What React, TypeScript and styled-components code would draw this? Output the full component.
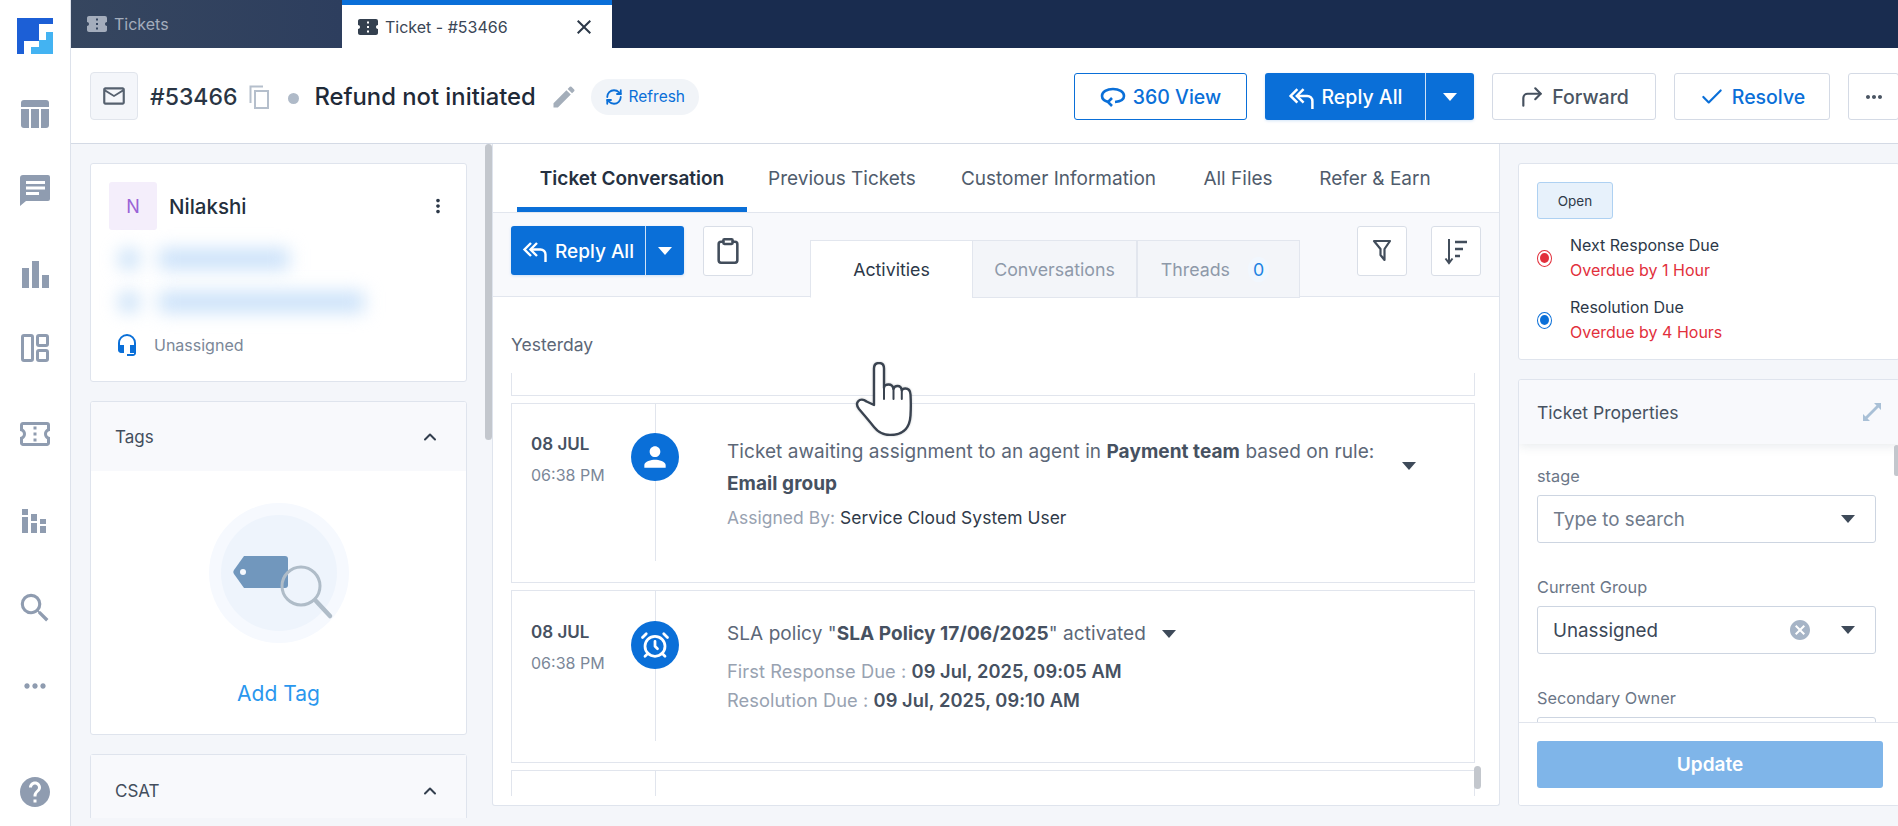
import React from 'react';
import styled, { createGlobalStyle } from 'styled-components';
import { MdConfirmationNumber, MdOutlineConfirmationNumber, MdSearch, MdMoreHoriz, MdHelp, MdMailOutline, MdEdit, MdPerson, MdHeadsetMic, MdCancel, MdClose, MdMoreVert } from 'react-icons/md';
import { CornerUpRight, Check, Clipboard, ChevronUp, AlarmClock, RefreshCw } from 'lucide-react';

const FONT = `"Inter", "Noto Sans", "Liberation Sans", sans-serif`;

const Global = createGlobalStyle`
  html, body { margin: 0; padding: 0; height: 826px; overflow: hidden; background: #f4f6fa; }
  * { box-sizing: border-box; }
  body { font-family: ${FONT}; color: #2c3848; }
`;

const Page = styled.div`
  position: relative;
  display: flex;
  width: 1898px;
  height: 826px;
  overflow: hidden;
`;

const Sidebar = styled.nav`
  width: 71px;
  flex: none;
  background: #fff;
  border-right: 1px solid #dde2eb;
  display: flex;
  flex-direction: column;
  align-items: center;
  padding-top: 18px;
`;

const NavSlot = styled.div<{ $mt?: number }>`
  height: 40px;
  width: 100%;
  margin-top: ${p => p.$mt ?? 0}px;
  display: flex;
  align-items: center;
  justify-content: center;
  color: #8f9cb0;
  flex: none;
`;

const LogoSlot = styled.div`
  height: 36px;
  flex: none;
  display: flex;
`;

const Main = styled.div`
  flex: 1;
  min-width: 0;
  display: flex;
  flex-direction: column;
`;

const TopBar = styled.div`
  height: 48px;
  flex: none;
  background: #192c4f;
  display: flex;
`;

const TabChip = styled.div<{ $active?: boolean }>`
  width: ${p => (p.$active ? 270 : 271)}px;
  display: flex;
  align-items: center;
  gap: 5px;
  padding: ${p => (p.$active ? '0 16px 0 14px' : '0 0 0 14px')};
  font-size: 16px;
  color: ${p => (p.$active ? '#3a4656' : '#a4adbc')};
  background: ${p => (p.$active ? '#fff' : 'linear-gradient(90deg,#36465f,#2d3e5e)')};
  border-top: ${p => (p.$active ? '5px solid #0a6fd8' : '0')};
`;

const TabIcon = styled.span<{ $active?: boolean }>`
  display: flex;
  color: ${p => (p.$active ? '#34404f' : '#a4adbc')};
`;

const TabClose = styled.span`
  margin-left: auto;
  display: flex;
  color: #2c3848;
`;

const Header = styled.header`
  height: 96px;
  flex: none;
  background: #fff;
  border-bottom: 1px solid #d4dae5;
  display: flex;
  align-items: center;
  padding: 2px 0 0 19px;
  overflow: hidden;
`;

const MailBox = styled.div`
  width: 48px;
  height: 48px;
  border: 1px solid #e1e5ec;
  border-radius: 4px;
  background: #f4f6fa;
  display: flex;
  align-items: center;
  justify-content: center;
  color: #56616f;
  margin: -2px 12px 0 0;
`;

const TicketNo = styled.div`
  font-size: 23px;
  color: #2a3544;
  font-weight: 500;
  margin-right: 12px;
`;

const Dot = styled.span`
  width: 11px;
  height: 11px;
  border-radius: 50%;
  background: #afbac8;
  margin: 3px 15px 0 19px;
`;

const TicketTitle = styled.div`
  font-size: 23.8px;
  font-weight: 500;
  color: #1f2a38;
  margin-right: 14px;
`;

const RefreshPill = styled.div`
  height: 36px;
  width: 108px;
  border-radius: 18px;
  margin-left: 13px;
  background: #f1f4f8;
  display: flex;
  align-items: center;
  justify-content: center;
  gap: 6px;
  color: #0a6fd8;
  font-size: 15.5px;
`;

const HeaderRight = styled.div`
  margin-left: auto;
  display: flex;
  align-items: center;
  gap: 18px;
  margin-right: -1px;
`;

const OutlineBtn = styled.div<{ $w: number; $tone?: 'blue' | 'plain' | 'resolve' }>`
  width: ${p => p.$w}px;
  height: 47px;
  flex: none;
  background: #fff;
  border-radius: 3px;
  border: 1px solid ${p => (p.$tone === 'blue' ? '#0a6fd8' : '#d4dae5')};
  color: ${p => (p.$tone === 'plain' ? '#4a5563' : '#0a6fd8')};
  display: flex;
  align-items: center;
  justify-content: center;
  gap: 7px;
  font-size: 19.5px;
  font-weight: 500;
`;

const ForwardIc = styled.span`
  display: flex;
  color: #46515f;
`;

const SplitBtn = styled.div<{ $w: number; $main: number; $h: number; $fs: number }>`
  width: ${p => p.$w}px;
  height: ${p => p.$h}px;
  flex: none;
  display: grid;
  grid-template-columns: ${p => p.$main}px 1fr;
  background: #0a6fd8;
  border-radius: 3px;
  color: #fff;
  font-size: ${p => p.$fs}px;
  font-weight: 500;
  box-shadow: 0 1px 3px rgba(10, 111, 216, 0.18);
`;

const SplitMain = styled.div`
  display: flex;
  align-items: center;
  justify-content: center;
  gap: 7px;
  padding-top: 1px;
  border-right: 1px solid #cfe2f7;
`;

const SplitCaret = styled.div`
  display: flex;
  align-items: center;
  justify-content: center;
`;

const Caret = styled.span<{ $color?: string; $w?: number }>`
  display: block;
  width: 0;
  height: 0;
  border-left: ${p => p.$w ?? 7}px solid transparent;
  border-right: ${p => p.$w ?? 7}px solid transparent;
  border-top: ${p => (p.$w ?? 7) + 1}px solid ${p => p.$color ?? '#3e4a59'};
`;

const Body = styled.div`
  flex: 1;
  min-height: 0;
  display: flex;
  background: #f4f6fa;
`;

const LeftCol = styled.aside`
  position: relative;
  width: 421px;
  flex: none;
  padding: 19px 0 0 19px;
`;

const LeftStack = styled.div`
  width: 377px;
  height: 655px;
  overflow: hidden;
  display: flex;
  flex-direction: column;
  gap: 19px;
`;

const ScrollThumb = styled.span<{ $x: number; $y: number; $w: number; $h: number }>`
  position: absolute;
  left: ${p => p.$x}px;
  top: ${p => p.$y}px;
  width: ${p => p.$w}px;
  height: ${p => p.$h}px;
  background: #c3c7cd;
  border-radius: 4px;
`;

const Card = styled.section`
  background: #fff;
  border: 1px solid #dfe4ed;
  border-radius: 3px;
  flex: none;
`;

const ContactCard = styled(Card)`
  height: 219px;
  padding: 18px 18px 0 18px;
`;

const ContactTop = styled.div`
  display: flex;
  align-items: center;
`;

const Avatar = styled.div`
  width: 48px;
  height: 48px;
  background: #f4eefb;
  color: #9a63d6;
  border-radius: 3px;
  display: flex;
  align-items: center;
  justify-content: center;
  font-size: 18px;
  margin-right: 12px;
`;

const Name = styled.div`
  font-size: 20.5px;
  font-weight: 500;
  color: #242f3d;
`;

const Kebab = styled.span`
  margin-left: auto;
  margin-right: -1px;
  display: flex;
  color: #2c3848;
`;

const BlurRow = styled.div<{ $top: number }>`
  display: flex;
  align-items: center;
  gap: 20px;
  margin: ${p => p.$top}px 0 0 10px;
  filter: blur(9px);
`;

const BlurDot = styled.span`
  width: 20px;
  height: 20px;
  border-radius: 50%;
  background: #bcd9f6;
`;

const BlurBar = styled.span<{ $w: number }>`
  width: ${p => p.$w}px;
  height: 20px;
  background: #c8e0f9;
`;

const AssignRow = styled.div`
  display: flex;
  align-items: center;
  gap: 15px;
  margin: 21px 0 0 6px;
  color: #7b8798;
  font-size: 16px;
`;

const HeadIc = styled.span`
  display: flex;
  color: #0a6fd8;
`;

const CollapseHead = styled.div<{ $h: number }>`
  height: ${p => p.$h}px;
  background: #f8f9fc;
  display: flex;
  align-items: center;
  justify-content: space-between;
  padding: 0 26px 0 24px;
  font-size: 17px;
  color: #434e5d;
`;

const TagsCard = styled(Card)`
  height: 334px;
  overflow: hidden;
`;

const CsatCard = styled(Card)`
  height: 80px;
  background: #f8f9fc;
`;

const TagsBody = styled.div`
  display: flex;
  flex-direction: column;
  align-items: center;
  padding-top: 32px;
`;

const AddTag = styled.div`
  margin-top: 38px;
  color: #2a97ee;
  font-size: 21px;
`;

const Center = styled.main`
  width: 1008px;
  height: 662px;
  flex: none;
  background: #fff;
  border: 1px solid #dfe4ed;
  border-top: 0;
  border-radius: 0 0 3px 3px;
  display: flex;
  flex-direction: column;
  overflow: hidden;
  position: relative;
`;

const MainTabs = styled.div`
  height: 69px;
  flex: none;
  display: flex;
  border-bottom: 1px solid #e2e6ee;
  padding-left: 24px;
`;

const MainTab = styled.div<{ $active?: boolean; $w: number }>`
  width: ${p => p.$w}px;
  display: flex;
  align-items: center;
  justify-content: center;
  font-size: 19px;
  white-space: nowrap;
  color: ${p => (p.$active ? '#253040' : '#505c6c')};
  font-weight: ${p => (p.$active ? 600 : 400)};
  border-bottom: ${p => (p.$active ? '5px solid #0a6fd8' : '0')};
  padding-top: ${p => (p.$active ? '6px' : '0')};
`;

const SubBar = styled.div`
  height: 84px;
  flex: none;
  display: flex;
  background: #f8f9fc;
  border-bottom: 1px solid #e2e6ee;
  padding: 13px 0 0 18px;
`;

const SquareBtn = styled.div`
  width: 50px;
  height: 50px;
  flex: none;
  background: #fff;
  border: 1px solid #d9dee7;
  border-radius: 3px;
  display: flex;
  align-items: center;
  justify-content: center;
  color: #424d5b;
`;

const ClipWrap = styled(SquareBtn)`
  margin-left: 19px;
`;

const SegTabs = styled.div`
  display: flex;
  margin: 14px 0 -1px 57px;
`;

const Seg = styled.div<{ $active?: boolean; $w: number; $pr?: number }>`
  width: ${p => p.$w}px;
  height: 58px;
  display: flex;
  align-items: center;
  justify-content: center;
  gap: 18px;
  padding: 1px ${p => p.$pr ?? 0}px 0 0;
  font-size: 17.8px;
  border: 1px solid #e2e6ee;
  border-right-width: ${p => (p.$active ? 0 : 1)}px;
  border-bottom: ${p => (p.$active ? '1px solid #fff' : '1px solid #e2e6ee')};
  background: ${p => (p.$active ? '#fff' : '#f3f5f9')};
  color: ${p => (p.$active ? '#2c3848' : '#8e99a9')};
`;

const Count = styled.span`
  color: #1d83e2;
  background: #f1f7fe;
  border-radius: 50%;
  padding: 2px 5px;
`;

const SubRight = styled.div`
  display: flex;
  gap: 24px;
  margin-left: 57px;
`;

const DayLabel = styled.div`
  height: 76px;
  flex: none;
  padding: 37px 0 0 18px;
  font-size: 17.5px;
  line-height: 22px;
  color: #5c6777;
`;

const Feed = styled.div`
  flex: 1;
  min-height: 0;
  margin-left: 18px;
  width: 964px;
  overflow: hidden;
  display: flex;
  flex-direction: column;
  gap: 7px;
  margin-bottom: 9px;
`;

const EventCard = styled.article<{ $h: number; $open?: boolean }>`
  height: ${p => p.$h}px;
  flex: none;
  display: grid;
  grid-template-columns: 215px 1fr;
  border: 1px solid #e1e5ed;
  border-top-width: ${p => (p.$open ? 0 : 1)}px;
  border-bottom-width: ${p => (p.$h < 30 && !p.$open ? 0 : 1)}px;
  overflow: hidden;
`;

const TimeCol = styled.div<{ $lineH: number; $top?: number }>`
  position: relative;
  height: ${p => p.$lineH}px;
  padding: ${p => p.$top ?? 27}px 0 0 19px;
  display: flex;
  flex-direction: column;
  background: linear-gradient(#e1e5ed, #e1e5ed) no-repeat 143px 0 / 1px 100%;
`;

const DateText = styled.div`
  font-size: 17px;
  font-weight: 600;
  line-height: 26px;
  color: #465161;
`;

const TimeText = styled.div`
  font-size: 16px;
  line-height: 22px;
  margin-top: 7px;
  color: #7b8798;
`;

const EventDisc = styled.span<{ $top: number }>`
  position: absolute;
  left: 119px;
  top: ${p => p.$top}px;
  width: 48px;
  height: 48px;
  border-radius: 50%;
  background: #0a6fd8;
  color: #fff;
  display: flex;
  align-items: center;
  justify-content: center;
`;

const EventBody = styled.div<{ $top: number }>`
  padding-top: ${p => p.$top}px;
  font-size: 19px;
  letter-spacing: 0.06px;
  color: #5c6777;
  white-space: nowrap;
`;

const EventLine = styled.div`
  line-height: 32px;
  display: flex;
  align-items: center;
`;

const Strong = styled.b`
  font-weight: 700;
  color: #465161;
  white-space: pre;
`;

const LineText = styled.span`
  white-space: pre;
`;

const Muted = styled.div<{ $top?: number; $fs?: number }>`
  font-size: ${p => p.$fs ?? 17.4}px;
  line-height: 29px;
  color: #98a2b1;
  margin-top: ${p => p.$top ?? 0}px;
`;

const MetaValue = styled.span`
  color: #2f3a49;
`;

const MetaStrong = styled.b`
  color: #465161;
  font-weight: 600;
`;

const CaretSlot = styled.span<{ $ml: number; $mt: number }>`
  display: flex;
  align-self: flex-start;
  height: 0;
  margin-left: ${p => p.$ml}px;
  margin-top: ${p => p.$mt}px;
`;

const RightCol = styled.aside`
  flex: 1;
  min-width: 0;
  padding: 19px 0 0 18px;
  display: flex;
  flex-direction: column;
  gap: 19px;
  margin-right: -2px;
`;

const StatusCard = styled(Card)`
  height: 197px;
  padding: 18px;
`;

const OpenBadge = styled.div`
  width: 76px;
  height: 37px;
  background: #e7f1fb;
  border: 1px solid #aed1f2;
  border-radius: 3px;
  display: flex;
  align-items: center;
  justify-content: center;
  font-size: 13.5px;
  color: #2f3a49;
`;

const Sla = styled.div`
  display: flex;
  align-items: center;
  gap: 18px;
  margin: 0 0 12px 0;
`;

const SlaList = styled.div`
  margin-top: 14px;
`;

const SlaDot = styled.span<{ $c: string }>`
  width: 15px;
  height: 17px;
  border-radius: 50%;
  border: 1px solid ${p => p.$c};
  flex: none;
  display: flex;
  align-items: center;
  justify-content: center;
  &::after {
    content: '';
    width: 9px;
    height: 10px;
    border-radius: 50%;
    background: ${p => p.$c};
  }
`;

const SlaTitle = styled.div`
  font-size: 16px;
  line-height: 25px;
  color: #2c3848;
`;

const SlaOver = styled(SlaTitle)`
  color: #e2303c;
`;

const PropsCard = styled(Card)`
  position: relative;
  height: 427px;
  overflow: hidden;
  display: flex;
  flex-direction: column;
`;

const PropsHead = styled.div`
  height: 64px;
  flex: none;
  background: #f8f9fc;
  box-shadow: 0 2px 10px rgba(60, 80, 110, 0.12);
  display: flex;
  align-items: center;
  justify-content: space-between;
  padding: 0 17px 0 18px;
  font-size: 17.6px;
  color: #465161;
  position: relative;
`;

const PropsBody = styled.div`
  flex: 1;
  min-height: 0;
  overflow: hidden;
  padding: 21px 23px 0 18px;
`;

const FieldLabel = styled.div`
  font-size: 16.3px;
  line-height: 22px;
  color: #6b7687;
  margin-bottom: 8px;
`;

const Field = styled.div`
  height: 48px;
  border: 1px solid #cdd5e1;
  border-radius: 3px;
  background: #fff;
  display: flex;
  align-items: center;
  padding: 0 20px 0 15px;
  font-size: 18.8px;
  margin-bottom: 33px;
`;

const FieldText = styled.span<{ $ph?: boolean }>`
  color: ${p => (p.$ph ? '#707b8b' : '#3b4757')};
`;

const ClearIc = styled.span`
  margin-left: auto;
  margin-right: 29px;
  display: flex;
  color: #a6b4c6;
`;

const FieldCaret = styled.span<{ $auto?: boolean }>`
  display: flex;
  margin-left: ${p => (p.$auto ? 'auto' : '0')};
`;

const PropsFoot = styled.div`
  height: 83px;
  flex: none;
  border-top: 1px solid #e1e5ed;
  background: #fff;
  padding: 18px 0 0 18px;
`;

const UpdateBtn = styled.div`
  width: 346px;
  height: 47px;
  background: #7fb5e9;
  border-radius: 3px;
  color: #fff;
  font-size: 19px;
  font-weight: 600;
  display: flex;
  align-items: center;
  justify-content: center;
`;

const HandCursor = styled.svg`
  position: absolute;
  left: 855px;
  top: 362px;
  pointer-events: none;
  filter: drop-shadow(0 0 1px rgba(40, 50, 60, 0.25));
`;

const Logo = () => (
  <svg width="36" height="36" viewBox="0 0 36 36" aria-hidden>
    <path d="M0 0H36V6H22V23H7V36H0Z" fill="#1c5fd6" />
    <path d="M29 14H36V36H14V29H22V22H29Z" fill="#43b3f2" />
  </svg>
);

const TableIcon = () => (
  <svg width="30" height="30" viewBox="0 0 30 30" fill="#8f9cb0" aria-hidden>
    <path d="M4 1h22a3 3 0 0 1 3 3v4H1V4a3 3 0 0 1 3-3z" />
    <path d="M1 10h8v19H4a3 3 0 0 1-3-3z" />
    <rect x="11" y="10" width="8" height="19" />
    <path d="M21 10h8v16a3 3 0 0 1-3 3h-5z" />
  </svg>
);

const ChatIcon = () => (
  <svg width="32" height="32" viewBox="0 0 32 32" fill="#8f9cb0" aria-hidden>
    <path d="M4 1h25a2 2 0 0 1 2 2v22a2 2 0 0 1-2 2H7l-6 5V4a3 3 0 0 1 3-3z" />
    <path d="M7 7h19v3H7zM7 12.500h19v3H7zM7 18h13v3H7z" fill="#fff" />
  </svg>
);

const ChartIcon = () => (
  <svg width="28" height="27" viewBox="0 0 28 27" fill="#8f9cb0" aria-hidden>
    <rect x="1" y="7" width="7" height="20" />
    <rect x="11" y="0" width="7" height="27" />
    <rect x="21" y="14" width="7" height="13" />
  </svg>
);

const PanelsIcon = () => (
  <svg width="30" height="30" viewBox="0 0 30 30" fill="none" stroke="#8f9cb0" strokeWidth="3" aria-hidden>
    <rect x="2.500" y="2.500" width="10" height="25" rx="1.500" />
    <rect x="17.500" y="2.500" width="10" height="10" rx="1.500" />
    <rect x="17.500" y="17.500" width="10" height="10" rx="1.500" />
  </svg>
);

const BarsIcon = () => (
  <svg width="28" height="26" viewBox="0 0 28 26" fill="#8f9cb0" aria-hidden>
    <rect x="1" y="1" width="6" height="6" />
    <rect x="1" y="9" width="6" height="16" />
    <rect x="10" y="6" width="6" height="7" />
    <rect x="10" y="15" width="6" height="10" />
    <rect x="19" y="11" width="6" height="5" />
    <rect x="19" y="18" width="6" height="7" />
  </svg>
);

const CopyIcon = () => (
  <svg width="20" height="24" viewBox="0 0 20 24" fill="none" stroke="#b5bfcc" strokeWidth="2" aria-hidden>
    <path d="M14 1.500H1.500V18" />
    <rect x="6" y="6" width="13" height="17" />
  </svg>
);

const View360 = () => (
  <svg width="26" height="22" viewBox="0 0 26 22" fill="none" stroke="#0a6fd8" strokeWidth="2.600" aria-hidden>
    <path d="M15 16c5-.500 9-2.500 9-6 0-4.200-5-7-11-7S2 5.800 2 10c0 3 3 5.200 7 6" />
    <path d="M12 12l-4 4 4 4" />
  </svg>
);

const ReplyAllGlyph = ({ size }: { size: number }) => (
  <svg width={size} height={size} viewBox="0 0 26 26" fill="none" stroke="#fff" strokeWidth="2.400" strokeLinejoin="miter" aria-hidden>
    <path d="M9 5 2.500 11.500 9 18" />
    <path d="M15 5 8.500 11.500 15 18" />
    <path d="M9 11.500h9.500a5 5 0 0 1 5 5V24" />
  </svg>
);

const SortIcon = () => (
  <svg width="24" height="30" viewBox="0 0 24 30" fill="none" stroke="#424d5b" strokeWidth="2" aria-hidden>
    <path d="M5 3v23M1.500 22.500 5 27l3.500-4.500" />
    <path d="M11 6h12M11 13h8M11 20h5" strokeWidth="2.400" />
  </svg>
);

const FunnelIcon = () => (
  <svg width="20" height="24" viewBox="0 0 20 24" fill="none" stroke="#424d5b" strokeWidth="2.200" aria-hidden>
    <path d="M2 2h16l-5.500 8v11l-4-5v-6z" strokeLinejoin="round" />
  </svg>
);

const TagArt = () => (
  <svg width="140" height="140" viewBox="0 0 140 140" aria-hidden>
    <circle cx="70" cy="70" r="70" fill="#f6f9fe" />
    <circle cx="70" cy="70" r="58" fill="#eef4fc" />
    <path d="M35 53H76a3 3 0 0 1 3 3V82a3 3 0 0 1-3 3H35L25 71a3.500 3.500 0 0 1 0-4z" fill="#7197bd" />
    <circle cx="34" cy="69" r="3" fill="#f6f9fe" />
    <circle cx="92" cy="83" r="19" fill="none" stroke="#afbcc8" strokeWidth="3" />
    <path d="M107 98l14 15" stroke="#afbcc8" strokeWidth="4.500" strokeLinecap="round" />
  </svg>
);

const ExpandIcon = () => (
  <svg width="20" height="20" viewBox="0 0 20 20" fill="#a9c0d6" aria-hidden>
    <path d="M12 1h7v7l-2.500-2.500L5.500 16.500 8 19H1v-7l2.500 2.500 11-11z" />
  </svg>
);

const Hand = () => (
  <HandCursor width="60" height="74" viewBox="0 0 60 74" aria-hidden>
    <path
      d="M19 43V6.500C19 3 21 1 24 1s5 2 5 5.500V26c0-2 2-3.500 4.500-3.500S38 24 38.500 27c.5-2 2-3 4-3s4 1.500 4.300 4.500c.5-1.500 2-2 3.500-2 3 0 5 2 5.200 6 .4 7 .4 14 0 21C54.800 65 49 73 35 73c-8 0-12-3-16-8-3.500-4.500-9-11-15-18-2-2.500-2.500-5.500-1-7.500 2-2.500 5.500-2.500 8.500 0z"
      fill="#fff"
      stroke="#3a4350"
      strokeWidth="2.400"
      strokeLinejoin="round"
    />
    <path d="M29 25v12M38.500 27v10M46.800 28v9" fill="none" stroke="#3a4350" strokeWidth="2" strokeLinecap="round" />
  </HandCursor>
);

export default function App() {
  return (
    <Page>
      <Global />
      <Sidebar>
        <LogoSlot><Logo /></LogoSlot>
        <NavSlot $mt={40}><TableIcon /></NavSlot>
        <NavSlot $mt={36}><ChatIcon /></NavSlot>
        <NavSlot $mt={44}><ChartIcon /></NavSlot>
        <NavSlot $mt={34}><PanelsIcon /></NavSlot>
        <NavSlot $mt={46}><MdOutlineConfirmationNumber size={36} /></NavSlot>
        <NavSlot $mt={47}><BarsIcon /></NavSlot>
        <NavSlot $mt={47}><MdSearch size={38} /></NavSlot>
        <NavSlot $mt={38}><MdMoreHoriz size={32} /></NavSlot>
        <NavSlot $mt={66}><MdHelp size={36} /></NavSlot>
      </Sidebar>
      <Main>
        <TopBar>
          <TabChip>
            <TabIcon><MdConfirmationNumber size={24} /></TabIcon>
            Tickets
          </TabChip>
          <TabChip $active>
            <TabIcon $active><MdConfirmationNumber size={24} /></TabIcon>
            Ticket - #53466
            <TabClose><MdClose size={24} /></TabClose>
          </TabChip>
        </TopBar>
        <Header>
          <MailBox><MdMailOutline size={26} /></MailBox>
          <TicketNo>#53466</TicketNo>
          <CopyIcon />
          <Dot />
          <TicketTitle>Refund not initiated</TicketTitle>
          <MdEdit size={28} color="#a4aeba" />
          <RefreshPill><RefreshCw size={18} strokeWidth={2.4} />Refresh</RefreshPill>
          <HeaderRight>
            <OutlineBtn $w={173} $tone="blue"><View360 />360 View</OutlineBtn>
            <SplitBtn $w={209} $main={161} $h={47} $fs={19.5}>
              <SplitMain><ReplyAllGlyph size={27} />Reply All</SplitMain>
              <SplitCaret><Caret $color="#fff" $w={7} /></SplitCaret>
            </SplitBtn>
            <OutlineBtn $w={164} $tone="plain"><ForwardIc><CornerUpRight size={26} strokeWidth={2} /></ForwardIc>Forward</OutlineBtn>
            <OutlineBtn $w={156} $tone="resolve"><Check size={26} strokeWidth={2} />Resolve</OutlineBtn>
            <OutlineBtn $w={51} $tone="plain"><MdMoreHoriz size={24} /></OutlineBtn>
          </HeaderRight>
        </Header>
        <Body>
          <LeftCol>
            <LeftStack>
              <ContactCard>
                <ContactTop>
                  <Avatar>N</Avatar>
                  <Name>Nilakshi</Name>
                  <Kebab><MdMoreVert size={22} /></Kebab>
                </ContactTop>
                <BlurRow $top={19}><BlurDot /><BlurBar $w={130} /></BlurRow>
                <BlurRow $top={23}><BlurDot /><BlurBar $w={205} /></BlurRow>
                <AssignRow><HeadIc><MdHeadsetMic size={24} /></HeadIc>Unassigned</AssignRow>
              </ContactCard>
              <TagsCard>
                <CollapseHead $h={69}>Tags<ChevronUp size={20} strokeWidth={2.4} color="#333f4e" /></CollapseHead>
                <TagsBody>
                  <TagArt />
                  <AddTag>Add Tag</AddTag>
                </TagsBody>
              </TagsCard>
              <CsatCard>
                <CollapseHead $h={72}>CSAT<ChevronUp size={20} strokeWidth={2.4} color="#333f4e" /></CollapseHead>
              </CsatCard>
            </LeftStack>
            <ScrollThumb $x={414} $y={0} $w={7} $h={296} />
          </LeftCol>
          <Center>
            <MainTabs>
              <MainTab $active $w={230}>Ticket Conversation</MainTab>
              <MainTab $w={190}>Previous Tickets</MainTab>
              <MainTab $w={243}>Customer Information</MainTab>
              <MainTab $w={116}>All Files</MainTab>
              <MainTab $w={158}>Refer &amp; Earn</MainTab>
            </MainTabs>
            <SubBar>
              <SplitBtn $w={173} $main={135} $h={49} $fs={19}>
                <SplitMain><ReplyAllGlyph size={26} />Reply All</SplitMain>
                <SplitCaret><Caret $color="#fff" $w={7} /></SplitCaret>
              </SplitBtn>
              <ClipWrap><Clipboard size={28} strokeWidth={2.2} /></ClipWrap>
              <SegTabs>
                <Seg $active $w={162}>Activities</Seg>
                <Seg $w={165}>Conversations</Seg>
                <Seg $w={163} $pr={7}>Threads<Count>0</Count></Seg>
              </SegTabs>
              <SubRight>
                <SquareBtn><FunnelIcon /></SquareBtn>
                <SquareBtn><SortIcon /></SquareBtn>
              </SubRight>
            </SubBar>
            <DayLabel>Yesterday</DayLabel>
            <Feed>
              <EventCard $h={23} $open />
              <EventCard $h={180}>
                <TimeCol $lineH={157}>
                  <DateText>08 JUL</DateText>
                  <TimeText>06:38 PM</TimeText>
                  <EventDisc $top={29}><MdPerson size={32} /></EventDisc>
                </TimeCol>
                <EventBody $top={32}>
                  <EventLine>
                    <LineText>Ticket awaiting assignment to an agent in </LineText>
                    <Strong>Payment team</Strong>
                    <LineText> based on rule:</LineText>
                    <CaretSlot $ml={28} $mt={26}><Caret $w={7} /></CaretSlot>
                  </EventLine>
                  <EventLine><Strong>Email group</Strong></EventLine>
                  <Muted $top={3}>Assigned By: <MetaValue>Service Cloud System User</MetaValue></Muted>
                </EventBody>
              </EventCard>
              <EventCard $h={173}>
                <TimeCol $lineH={150} $top={28}>
                  <DateText>08 JUL</DateText>
                  <TimeText>06:38 PM</TimeText>
                  <EventDisc $top={30}><AlarmClock size={30} strokeWidth={2.2} /></EventDisc>
                </TimeCol>
                <EventBody $top={27}>
                  <EventLine>
                    <LineText>SLA policy "</LineText>
                    <Strong>SLA Policy 17/06/2025</Strong>
                    <LineText>" activated</LineText>
                    <CaretSlot $ml={16} $mt={12}><Caret $w={7} /></CaretSlot>
                  </EventLine>
                  <Muted $top={7} $fs={18.3}>First Response Due : <MetaStrong>09 Jul, 2025, 09:05 AM</MetaStrong></Muted>
                  <Muted $fs={18.3}>Resolution Due : <MetaStrong>09 Jul, 2025, 09:10 AM</MetaStrong></Muted>
                </EventBody>
              </EventCard>
              <EventCard $h={27}>
                <TimeCol $lineH={27} />
              </EventCard>
            </Feed>
            <ScrollThumb $x={981} $y={622} $w={7} $h={23} />
          </Center>
          <RightCol>
            <StatusCard>
              <OpenBadge>Open</OpenBadge>
              <SlaList>
                <Sla>
                  <SlaDot $c="#e2303c" />
                  <div>
                    <SlaTitle>Next Response Due</SlaTitle>
                    <SlaOver>Overdue by 1 Hour</SlaOver>
                  </div>
                </Sla>
                <Sla>
                  <SlaDot $c="#0a6fd8" />
                  <div>
                    <SlaTitle>Resolution Due</SlaTitle>
                    <SlaOver>Overdue by 4 Hours</SlaOver>
                  </div>
                </Sla>
              </SlaList>
            </StatusCard>
            <PropsCard>
              <PropsHead>Ticket Properties<ExpandIcon /></PropsHead>
              <PropsBody>
                <FieldLabel>stage</FieldLabel>
                <Field>
                  <FieldText $ph>Type to search</FieldText>
                  <FieldCaret $auto><Caret $w={7} /></FieldCaret>
                </Field>
                <FieldLabel>Current Group</FieldLabel>
                <Field>
                  <FieldText>Unassigned</FieldText>
                  <ClearIc><MdCancel size={24} /></ClearIc>
                  <FieldCaret><Caret $w={7} /></FieldCaret>
                </Field>
                <FieldLabel>Secondary Owner</FieldLabel>
                <Field />
              </PropsBody>
              <PropsFoot><UpdateBtn>Update</UpdateBtn></PropsFoot>
              <ScrollThumb $x={375} $y={65} $w={5} $h={31} />
            </PropsCard>
          </RightCol>
        </Body>
      </Main>
      <Hand />
    </Page>
  );
}
